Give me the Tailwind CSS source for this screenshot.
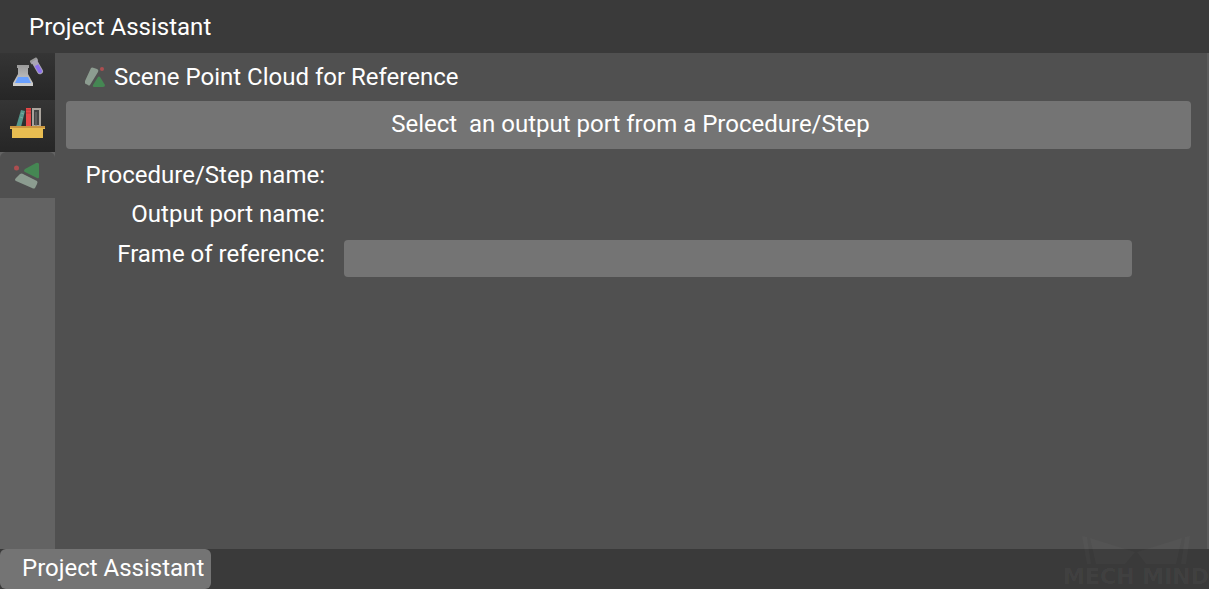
<!DOCTYPE html>
<html lang="en">

<head>
    <meta charset="UTF-8">
    <meta name="viewport" content="width=device-width, initial-scale=1.0">
    <title>Project Assistant</title>
    <script src="https://cdn.jsdelivr.net/npm/@tailwindcss/browser@4"></script>
</head>

<body class="relative flex flex-col min-h-screen bg-[#3a3a3a] text-white text-2xl font-['Roboto',sans-serif]">
    <header class="px-[29px] pt-[11px] pb-[10px]">
        <h1>Project Assistant</h1>
    </header>

    <div class="flex flex-1">
        <!-- tool tabs -->
        <nav class="flex flex-col w-[55px] bg-[#636363]">
            <button aria-label="Experiments" class="flex justify-center h-[47px] pt-1 bg-linear-to-b from-[#353535] to-[#262626]">
                <svg class="w-9 h-9" viewBox="0 0 36 36">
                    <defs>
                        <linearGradient id="glass" x1="0" y1="0" x2="0" y2="1">
                            <stop offset="0" stop-color="#999" />
                            <stop offset="1" stop-color="#d0d0d0" />
                        </linearGradient>
                    </defs>
                    <path d="M7 8h12v3h-1v6l5 9v3H3v-3l5-9v-6H7z" fill="url(#glass)" />
                    <path d="M8 20h10l3 6H5z" fill="#69a0ff" />
                    <g transform="rotate(-30 27 9)">
                        <rect x="23" y="1" width="8" height="4" rx="1" fill="#999" />
                        <path d="M24 3h6v12a3 3 0 0 1-6 0z" fill="#a9a5b5" />
                        <path d="M25 8h4v7a2 2 0 0 1-4 0z" fill="#8b70ec" />
                    </g>
                </svg>
            </button>
            <button aria-label="Resource library" class="flex justify-center h-[52px] pt-[6px] bg-linear-to-b from-[#353535] to-[#262626]">
                <svg class="w-9 h-9" viewBox="0 0 36 36">
                    <path d="M11 4l4 1-4 16H6z" fill="#54968a" />
                    <path d="M11 7l3 1M10 11l3 1" stroke="#7ba9a0" />
                    <rect x="16" y="2" width="5" height="19" fill="#e84848" />
                    <path d="M16 4h5M16 7h5" stroke="#bd3838" />
                    <path d="M23 3h7v17h-7z" fill="#444" stroke="#aaa49d" stroke-width="2" />
                    <path d="M26 6v14" stroke="#777" stroke-width="1" />
                    <path d="M0 20h35v3h-2v9H2v-9H0z" fill="#e8bd51" />
                    <path d="M0 21h35" stroke="#c99541" stroke-width="2" />
                </svg>
            </button>
            <button aria-label="Scene point cloud" class="flex justify-center h-[46px] pt-1 rounded-t-md bg-[#505050]">
                <svg class="w-9 h-9" viewBox="0 0 36 36">
                    <circle cx="6.500" cy="12" r="2.500" fill="#ad4e50" />
                    <path d="M26 7q2-1 3 1v13q0 2-2 1l-12-6q-2-1 0-3z" fill="#458753" />
                    <path d="M10 18q2-1 3 0l14 7q1 1 0 3l-2 4q-1 1-3 0L6 25q-2-1 0-3z" fill="#8c9c90" />
                </svg>
            </button>
        </nav>

        <main class="flex-1 pl-[11px] pr-4 border-r-2 border-[#5c5c5c] bg-[#505050]">
            <div class="flex items-center h-12 gap-[9px] pl-[19px]">
                <svg class="w-5 h-[22px]" viewBox="0 0 20 22">
                    <path d="M6 2q1-1 3 0l3 1q2 1 1 3L5 19q-1 1-2 0l-2-1q-2-1-1-3z" fill="#8c9c90" />
                    <circle cx="17" cy="3" r="2" fill="#ad4e50" />
                    <path d="M13 11q1-1 2 0l5 8q0 2-2 2h-8q-3 0-2-2z" fill="#458753" />
                </svg>
                <h2>Scene Point Cloud for Reference</h2>
            </div>

            <button class="block w-full h-12 pb-[2px] pl-1 rounded bg-[#747474] whitespace-pre">Select  an output port from a Procedure/Step</button>

            <div class="grid grid-cols-[259px_1fr] gap-x-[19px] pt-[6px] pr-[59px]">
                <span class="h-[39px] pt-1 text-right">Procedure/Step name:</span>
                <output aria-label="Procedure/Step name"></output>
                <span class="h-10 pt-1 text-right">Output port name:</span>
                <output aria-label="Output port name"></output>
                <label for="frame" class="h-10 pt-1 text-right">Frame of reference:</label>
                <input id="frame" type="text" class="w-full h-[37px] mt-[6px] px-2 rounded bg-[#747474] outline-none">
            </div>
        </main>
    </div>

    <footer class="flex h-10">
        <button class="pl-[22px] pr-[7px] pb-[2px] rounded-md bg-[#747474]">Project Assistant</button>
    </footer>

    <!-- watermark over the bottom corner -->
    <div class="absolute right-0 bottom-0 flex flex-col items-center pointer-events-none">
        <svg class="w-[108px] h-8" viewBox="0 0 108 32" fill="#fff" fill-opacity=".025">
            <path d="M0 3l5 1 4 27H5z" />
            <path d="M8 5l45 14-10 12H14z" />
            <path d="M100 5L55 19l9 12h30z" />
            <path d="M108 3l-5 1-4 27h5z" />
        </svg>
        <span class="text-[22px] leading-6 font-bold text-white/4 font-['DejaVu_Sans',sans-serif]">MECH MIND</span>
    </div>
</body>

</html>
